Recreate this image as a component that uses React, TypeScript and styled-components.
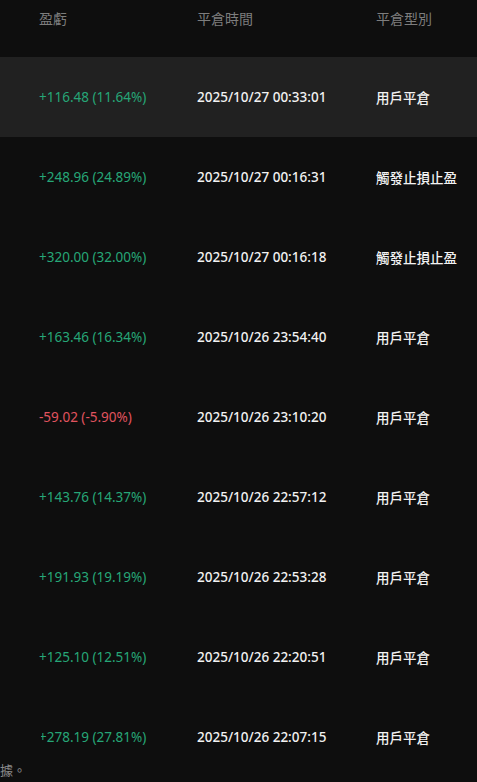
import styled, { createGlobalStyle } from "styled-components";

interface TradeProps {
  pnl: string;
  loss?: boolean;
  time: string;
  kind: string;
}

const trades: Array<TradeProps> = [
  { pnl: "+116.48 (11.64%)", time: "2025/10/27 00:33:01", kind: "用戶平倉" },
  { pnl: "+248.96 (24.89%)", time: "2025/10/27 00:16:31", kind: "觸發止損止盈" },
  { pnl: "+320.00 (32.00%)", time: "2025/10/27 00:16:18", kind: "觸發止損止盈" },
  { pnl: "+163.46 (16.34%)", time: "2025/10/26 23:54:40", kind: "用戶平倉" },
  { pnl: "-59.02 (-5.90%)", loss: true, time: "2025/10/26 23:10:20", kind: "用戶平倉" },
  { pnl: "+143.76 (14.37%)", time: "2025/10/26 22:57:12", kind: "用戶平倉" },
  { pnl: "+191.93 (19.19%)", time: "2025/10/26 22:53:28", kind: "用戶平倉" },
  { pnl: "+125.10 (12.51%)", time: "2025/10/26 22:20:51", kind: "用戶平倉" },
  { pnl: "+278.19 (27.81%)", time: "2025/10/26 22:07:15", kind: "用戶平倉" },
];

const GlobalStyle = createGlobalStyle`
  html, body {
    margin: 0;
    padding: 0;
    background: #0e0e0e;
    overflow: hidden;
  }
  body {
    font-family: "Noto Sans", "Noto Sans CJK TC", sans-serif;
  }
`;

const App = () => {
  return (
    <Page>
      <GlobalStyle />
      <HeaderRow>
        <HeadCell>盈虧</HeadCell>
        <HeadCell>平倉時間</HeadCell>
        <HeadCell>平倉型別</HeadCell>
      </HeaderRow>
      {trades.map((trade, index) => (
        <Row key={index} $active={index === 0}>
          <PnlCell $loss={!!trade.loss}>{trade.pnl}</PnlCell>
          <TimeCell>{trade.time}</TimeCell>
          <KindCell>{trade.kind}</KindCell>
        </Row>
      ))}
      {/* side panel edge that overlaps the table at the bottom-left */}
      <Note>
        <NoteLine>據。</NoteLine>
      </Note>
    </Page>
  );
};

export default App;

const Page = styled.div`
  position: relative;
  width: 477px;
  height: 782px;
  background: #0e0e0e;
  overflow: hidden;
`;

const HeaderRow = styled.div`
  display: grid;
  grid-template-columns: 158px 179px 1fr;
  padding: 9px 0 0 39px;
  height: 48px;
`;

const HeadCell = styled.div`
  font-size: 14px;
  line-height: 20px;
  color: #7d7d7d;
`;

const Row = styled.div<{ $active: boolean }>`
  display: grid;
  grid-template-columns: 158px 179px 1fr;
  align-items: center;
  padding-left: 39px;
  height: 80px;
  background: ${(p) => (p.$active ? "#212121" : "transparent")};
`;

const PnlCell = styled.div<{ $loss: boolean }>`
  font-size: 13.5px;
  color: ${(p) => (p.$loss ? "#e0535e" : "#26a677")};
  white-space: nowrap;
`;

const TimeCell = styled.div`
  font-size: 13.5px;
  font-weight: 500;
  color: #f2f2f2;
  white-space: nowrap;
`;

const KindCell = styled.div`
  font-size: 13.5px;
  font-weight: 500;
  color: #f2f2f2;
  white-space: nowrap;
`;

const Note = styled.div`
  position: absolute;
  left: 0;
  bottom: 0;
  width: 41px;
  height: 56px;
  background: #0e0e0e;
  display: flex;
  align-items: flex-end;
  padding-bottom: 3px;
  box-sizing: border-box;
`;

const NoteLine = styled.div`
  font-size: 13px;
  line-height: 18px;
  color: #8a8a8a;
  white-space: nowrap;
`;
